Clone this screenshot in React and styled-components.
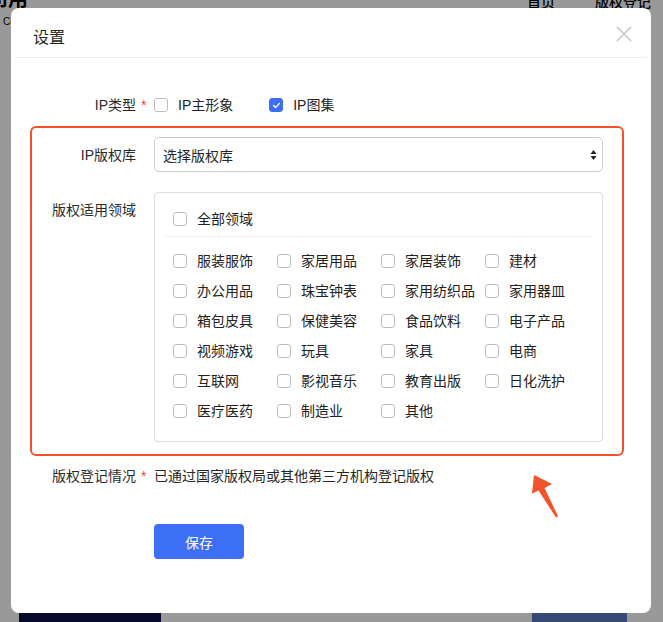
import styled, { createGlobalStyle } from "styled-components";

const GlobalStyle = createGlobalStyle`
  * {
    box-sizing: border-box;
  }
  html,
  body {
    margin: 0;
    padding: 0;
    background: #fff;
    font-family: "Liberation Sans", "Noto Sans CJK SC", sans-serif;
    -webkit-font-smoothing: antialiased;
  }
`;

const FIELDS = [
  "服装服饰", "家居用品", "家居装饰", "建材",
  "办公用品", "珠宝钟表", "家用纺织品", "家用器皿",
  "箱包皮具", "保健美容", "食品饮料", "电子产品",
  "视频游戏", "玩具", "家具", "电商",
  "互联网", "影视音乐", "教育出版", "日化洗护",
  "医疗医药", "制造业", "其他",
];

const CheckBox = ({ checked }) => (
  <Box $checked={checked}>
    {checked && (
      <svg width="9" height="9" viewBox="0 0 9 9">
        <polyline
          points="1.6,4.6 3.6,6.6 7.4,2.4"
          fill="none"
          stroke="#fff"
          strokeWidth="1.4"
          strokeLinecap="round"
          strokeLinejoin="round"
        />
      </svg>
    )}
  </Box>
);

const App = () => {
  return (
    <>
      <GlobalStyle />
      <Page>
        <Nav>
          <Logo>
            <LogoText>司用</LogoText>
            <LogoSub>CoCreate</LogoSub>
          </Logo>
          <NavLinks>
            <NavLink>首页</NavLink>
            <NavLink>版权登记</NavLink>
          </NavLinks>
        </Nav>
        <Cards>
          <Card $color="#0a0f47" $width="142px" />
          <Card $color="#5a7ac4" $width="95px" />
        </Cards>
      </Page>

      <Overlay>
        <Modal>
          <Header>
            <Title>设置</Title>
            <Close aria-label="close">
              <svg width="16" height="16" viewBox="0 0 16 16">
                <path d="M1 1 L15 15 M15 1 L1 15" stroke="#bdbdbd" strokeWidth="1.2" />
              </svg>
            </Close>
          </Header>
          <HeaderLine />

          <Body>
            <OuterRow>
              <Label>
                IP类型<Star>*</Star>
              </Label>
              <Options>
                <Option>
                  <CheckBox />
                  <OptionText>IP主形象</OptionText>
                </Option>
                <Option>
                  <CheckBox checked />
                  <OptionText>IP图集</OptionText>
                </Option>
              </Options>
            </OuterRow>

            <Highlight>
              <Row>
                <Label>
                  IP版权库<Star />
                </Label>
                <Select>
                  <span>选择版权库</span>
                  <svg width="7" height="12" viewBox="0 0 7 12">
                    <path d="M3.5 1 L6.5 5 L0.5 5 Z M3.5 11 L6.5 7 L0.5 7 Z" fill="#222" />
                  </svg>
                </Select>
              </Row>

              <Row $top>
                <Label $top>
                  版权适用领域<Star />
                </Label>
                <Group>
                  <AllRow>
                    <Option>
                      <CheckBox />
                      <OptionText>全部领域</OptionText>
                    </Option>
                  </AllRow>
                  <GroupLine />
                  <Grid>
                    {FIELDS.map((f) => (
                      <Option key={f}>
                        <CheckBox />
                        <OptionText>{f}</OptionText>
                      </Option>
                    ))}
                  </Grid>
                </Group>
              </Row>
            </Highlight>

            <OuterRow $gap>
              <Label>
                版权登记情况<Star>*</Star>
              </Label>
              <Plain>已通过国家版权局或其他第三方机构登记版权</Plain>
            </OuterRow>

            <SaveButton>保存</SaveButton>
          </Body>

          <Arrow width="34" height="50" viewBox="0 0 34 50">
            <polygon
              points="6,4 24,13 16.5,17 30,45 28,46.5 10.5,19.5 4,22.5"
              fill="#f3532a"
            />
          </Arrow>
        </Modal>
      </Overlay>
    </>
  );
};

const Page = styled.div`
  height: 622px;
  display: flex;
  flex-direction: column;
  justify-content: space-between;
  overflow: hidden;
  background: #fff;
`;

const Nav = styled.div`
  height: 40px;
  display: flex;
  justify-content: space-between;
  align-items: flex-start;
`;

const Logo = styled.div`
  display: flex;
  flex-direction: column;
  margin-left: -12px;
`;

const LogoText = styled.div`
  font-size: 20px;
  line-height: 20px;
  font-weight: 700;
  margin-top: -12px;
  color: #000;
  font-family: "Noto Sans CJK SC", sans-serif;
`;

const LogoSub = styled.div`
  font-size: 10px;
  line-height: 12px;
  margin-top: 8px;
  margin-left: 15px;
  color: #000;
`;

const NavLinks = styled.div`
  display: flex;
  gap: 40px;
  margin-right: 12px;
`;

const NavLink = styled.span`
  font-size: 14px;
  line-height: 14px;
  margin-top: -6px;
  color: #000;
  font-weight: 500;
  font-family: "Noto Sans CJK SC", sans-serif;
`;

const Cards = styled.div`
  height: 10px;
  display: flex;
  justify-content: space-between;
  padding: 0 36px 0 19px;
`;

const Card = styled.div`
  width: ${(p) => p.$width};
  background: ${(p) => p.$color};
`;

const Overlay = styled.div`
  position: fixed;
  inset: 0;
  background: rgba(0, 0, 0, 0.4);
  display: flex;
  align-items: flex-start;
  padding: 8px 0 0 11px;
`;

const Modal = styled.div`
  position: relative;
  width: 640px;
  background: #fff;
  border-radius: 8px;
  padding-bottom: 54px;
`;

const Header = styled.div`
  display: flex;
  justify-content: space-between;
  align-items: center;
  padding: 17px 19px 10px 22px;
`;

const Title = styled.div`
  font-size: 16px;
  line-height: 22px;
  color: #262626;
  font-family: "Noto Sans CJK SC", sans-serif;
`;

const Close = styled.button`
  border: 0;
  padding: 0;
  background: none;
  width: 16px;
  height: 16px;
  margin-bottom: 4px;
  display: flex;
  cursor: pointer;
`;

const HeaderLine = styled.div`
  height: 1px;
  margin: 0 4px;
  background: #eeeeee;
`;

const Body = styled.div`
  padding: 37px 27px 0 19px;
  display: flex;
  flex-direction: column;
  font-size: 14px;
  color: #262626;
`;

const OuterRow = styled.div`
  display: flex;
  align-items: center;
  height: 20px;
  padding-left: 2px;
  margin-top: ${(p) => (p.$gap ? "10px" : "0")};
`;

const Row = styled.div`
  display: flex;
  align-items: ${(p) => (p.$top ? "flex-start" : "center")};
  margin-top: ${(p) => (p.$top ? "20px" : "0")};
`;

const Label = styled.div`
  width: 122px;
  flex-shrink: 0;
  display: flex;
  justify-content: flex-end;
  font-size: 14px;
  line-height: 20px;
  color: #2b2b2b;
  padding-top: ${(p) => (p.$top ? "8px" : "0")};
`;

const Star = styled.span`
  width: 18px;
  padding-left: 5px;
  color: #f04134;
  font-size: 14px;
`;

const Options = styled.div`
  display: flex;
  gap: 36px;
`;

const Option = styled.label`
  display: flex;
  align-items: center;
  gap: 10px;
  cursor: pointer;
`;

const Box = styled.span`
  width: 14px;
  height: 14px;
  flex-shrink: 0;
  border-radius: 3px;
  border: 1px solid ${(p) => (p.$checked ? "#3d6ef6" : "#bdbdbd")};
  background: ${(p) => (p.$checked ? "#3d6ef6" : "#fff")};
  display: flex;
  align-items: center;
  justify-content: center;
`;

const OptionText = styled.span`
  font-size: 14px;
  line-height: 20px;
  color: #222;
  white-space: nowrap;
`;

const Highlight = styled.div`
  margin-top: 11px;
  border: 2px solid #f3532a;
  border-radius: 6px;
  padding: 9px 19px 12px 0;
`;

const Select = styled.div`
  flex: 1;
  height: 35px;
  border: 1px solid #cccccc;
  border-radius: 5px;
  padding: 0 5px 0 8px;
  display: flex;
  align-items: center;
  justify-content: space-between;
  font-size: 14px;
  color: #262626;
`;

const Group = styled.div`
  flex: 1;
  border: 1px solid #dddddd;
  border-radius: 4px;
  padding: 11px 9px 15px 10px;
`;

const AllRow = styled.div`
  height: 30px;
  display: flex;
  align-items: center;
  padding-left: 8px;
`;

const GroupLine = styled.div`
  height: 1px;
  margin-top: 2px;
  background: #f0f0f0;
`;

const Grid = styled.div`
  margin-top: 9px;
  padding-left: 8px;
  display: grid;
  grid-template-columns: repeat(4, 104px);
  grid-auto-rows: 30px;
  align-items: center;
`;

const Plain = styled.span`
  font-size: 14px;
  line-height: 20px;
  color: #262626;
`;

const SaveButton = styled.button`
  margin: 38px 0 0 124px;
  width: 90px;
  height: 35px;
  border: 0;
  border-radius: 4px;
  background: #3d6ef6;
  color: #fff;
  font-size: 14px;
  font-family: "Liberation Sans", "Noto Sans CJK SC", sans-serif;
  cursor: pointer;
`;

const Arrow = styled.svg`
  position: absolute;
  left: 517px;
  top: 463px;
`;

export default App;
